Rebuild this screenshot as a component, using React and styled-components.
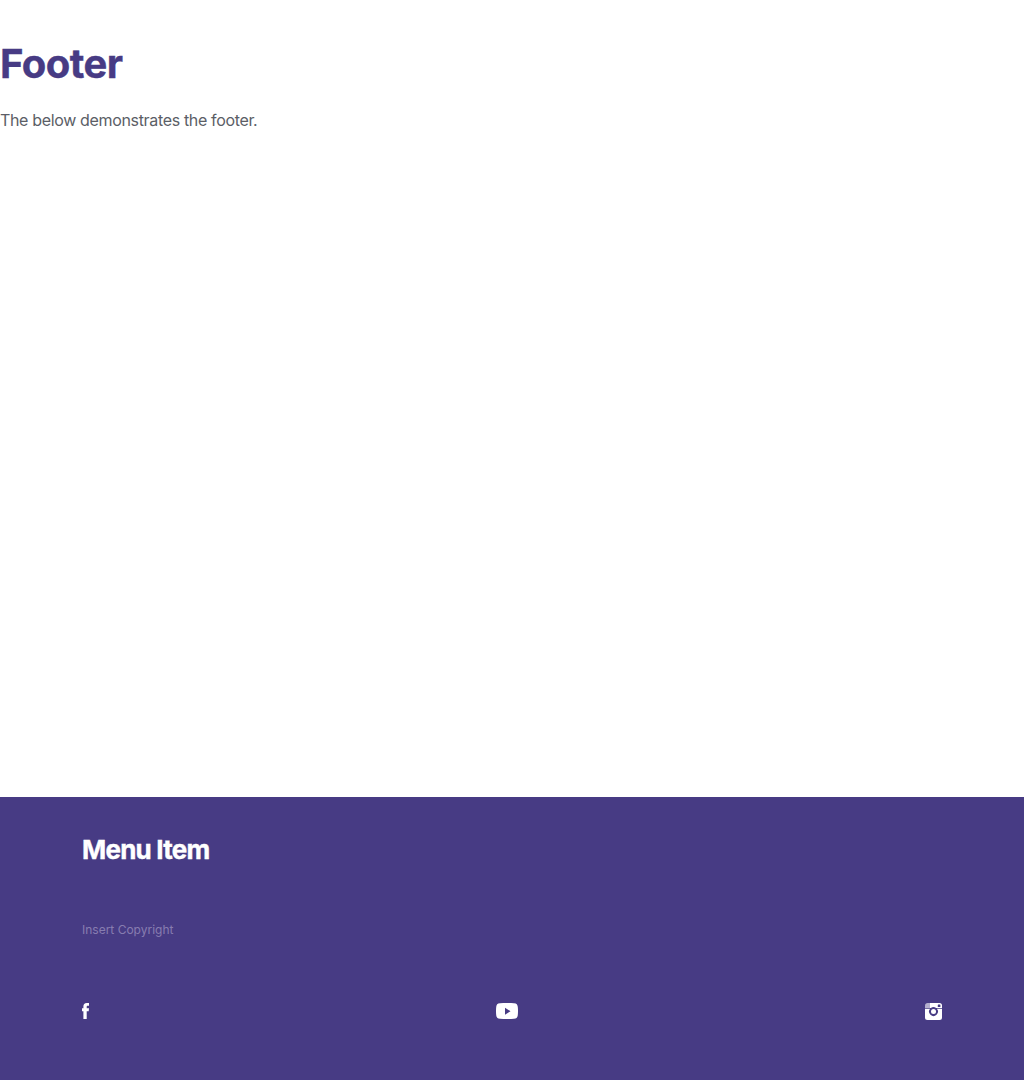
import React from "react";
import styled, { createGlobalStyle } from "styled-components";

const Global = createGlobalStyle`
  body { margin: 0; background: #fff; font-family: Inter, "Liberation Sans", sans-serif; }
`;
const Page = styled.div`
  min-height: 1080px;
  display: flex;
  flex-direction: column;
`;
const Main = styled.main`
  flex: 1;
  padding-top: 39px;
`;
const Title = styled.h1`
  margin: 0;
  font-size: 40px;
  line-height: 50px;
  font-weight: 700;
  letter-spacing: -0.55px;
  -webkit-text-stroke: 0.4px currentColor;
  color: #473b84;
`;
const Intro = styled.p`
  margin: 19px 0 0;
  font-size: 16px;
  line-height: 24px;
  letter-spacing: -0.34px;
  color: #5b5e66;
`;
const Footer = styled.footer`
  box-sizing: border-box;
  height: 283px;
  padding: 37px 82px 0;
  background: #473b84;
`;
const MenuTitle = styled.h2`
  margin: 0;
  font-size: 26px;
  line-height: 32px;
  font-weight: 700;
  letter-spacing: -0.78px;
  -webkit-text-stroke: 0.4px currentColor;
  color: #fff;
`;
const Copyright = styled.p`
  margin: 55px 0 0;
  font-size: 12px;
  line-height: 18px;
  color: #877db0;
`;
const Social = styled.div`
  margin-top: 64px;
  display: flex;
  justify-content: space-between;
`;
const SocialLink = styled.a`
  display: block;
  height: 17px;
  color: #fff;
  svg { display: block; fill: currentColor; }
`;

export default function App() {
  return (
    <Page>
      <Global />
      <Main>
        <Title>Footer</Title>
        <Intro>The below demonstrates the footer.</Intro>
      </Main>
      <Footer>
        <MenuTitle>Menu Item</MenuTitle>
        <Copyright>Insert Copyright</Copyright>
        <Social>
          <SocialLink aria-label="Facebook">
            <svg width="7" height="16" viewBox="0 0 7 16">
              <path d="M1.400 16V8.200H0V5.200h1.400V3.500C1.400 1.300 2.400 0 4.800 0H7v2.800H5.800c-.9 0-1.100.4-1.100 1.100V5.200H7L6.700 8.200H4.700V16z" />
            </svg>
          </SocialLink>
          <SocialLink aria-label="YouTube">
            <svg width="22" height="16" viewBox="0 0 22 16">
              <path fillRule="evenodd" d="M4 .3C8 -.1 14 -.1 18 .3C20.800 .500 21.500 1.600 21.800 4C22.070 6.500 22.070 9.500 21.800 12C21.500 14.400 20.800 15.500 18 15.700C14 16.100 8 16.100 4 15.700C1.200 15.500 .500 14.400 .200 12C-.070 9.500 -.070 6.500 .200 4C.500 1.600 1.200 .500 4 .300zM9 4.700v7l5.500-3.500z" />
            </svg>
          </SocialLink>
          <SocialLink aria-label="Instagram">
            <svg width="17" height="17" viewBox="0 0 17 17">
              <path d="M5 0h9.500A2.500 2.500 0 0 1 17 2.500V5H11.100A4.400 4.400 0 0 0 5.900 5H5z" />
              <path opacity=".6" d="M0 5V2.500Q0 .800 1.500 .300L2.500 0H5V5z" />
              <path d="M0 5.700H5.130A4.400 4.400 0 1 0 11.870 5.700H17v8.800a2.500 2.500 0 0 1-2.500 2.500h-12A2.500 2.500 0 0 1 0 14.500z" />
              <circle cx="8.500" cy="8.500" r="2.500" />
              <rect x="12.800" y="1.600" width="2.600" height="2.500" rx=".4" fill="#473b84" />
            </svg>
          </SocialLink>
        </Social>
      </Footer>
    </Page>
  );
}
